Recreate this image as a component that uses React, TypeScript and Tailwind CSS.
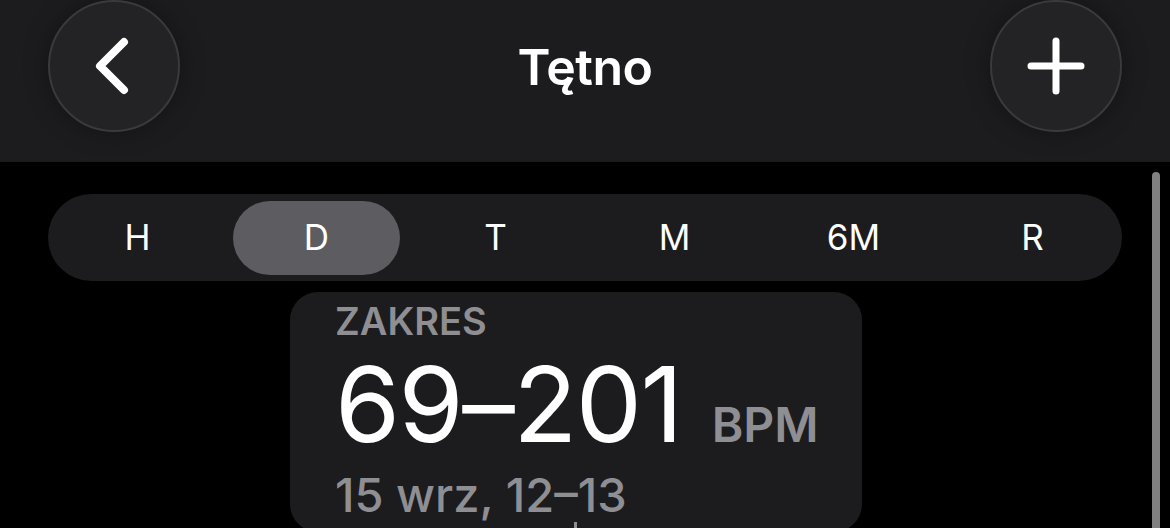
import React, { useState } from "react";

const segments = ["H", "D", "T", "M", "6M", "R"];

function RoundButton({ children }: { children: React.ReactNode }) {
  return (
    <button className="flex h-[132px] w-[132px] items-center justify-center rounded-full border-2 border-[#3a3a3d] bg-[#232326] shadow-[0_0_24px_rgba(0,0,0,0.35)]">
      {children}
    </button>
  );
}

export default function App() {
  const [active, setActive] = useState("D");

  return (
    <div
      className="relative h-[528px] w-[1170px] overflow-hidden bg-black text-white"
      style={{ fontFamily: "Inter, 'Noto Sans', sans-serif" }}
    >
      {/* nagłówek */}
      <header className="flex h-[162px] items-start justify-between bg-[#1c1c1e] px-[48px]">
        <RoundButton>
          <svg width="60" height="60" viewBox="0 0 60 60" fill="none">
            <path
              d="M40 6 L16 30 L40 54"
              stroke="white"
              strokeWidth="8"
              strokeLinecap="round"
              strokeLinejoin="round"
            />
          </svg>
        </RoundButton>
        <h1 className="mt-[37px] text-[50px] leading-[60px] font-semibold tracking-[-0.5px]">
          Tętno
        </h1>
        <RoundButton>
          <svg width="60" height="60" viewBox="0 0 60 60" fill="none">
            <path
              d="M30 5 V55 M5 30 H55"
              stroke="white"
              strokeWidth="7"
              strokeLinecap="round"
            />
          </svg>
        </RoundButton>
      </header>

      {/* zakres czasu */}
      <div className="mx-[48px] mt-[32px] grid h-[87px] grid-cols-6 items-center rounded-full bg-[#1c1c1e]">
        {segments.map((s) => (
          <button
            key={s}
            onClick={() => setActive(s)}
            className={`mx-[6px] flex h-[74px] items-center justify-center rounded-full text-[35px] font-normal ${
              active === s ? "bg-[#5c5c61]" : ""
            }`}
          >
            {s}
          </button>
        ))}
      </div>

      {/* karta z zakresem */}
      <div className="ml-[290px] mt-[11px] h-[240px] w-[572px] rounded-[28px] bg-[#1c1c1e] pl-[45px] pt-[6px]">
        <div className="text-[38px] leading-[46px] font-semibold text-[#8e8e93]">
          ZAKRES
        </div>
        <div className="mt-[18px] flex items-baseline leading-[84px]">
          <span className="text-[105px] font-normal tracking-[-1.5px]">
            69–201
          </span>
          <span className="ml-[30px] text-[48px] font-semibold text-[#8e8e93]">
            BPM
          </span>
        </div>
        <div className="mt-[4px] text-[47px] leading-[48px] font-medium text-[#8e8e93]">
          15 wrz, 12–13
        </div>
      </div>

      {/* wskaźnik przewijania */}
      <div className="absolute right-[10px] top-[172px] h-[400px] w-[8px] rounded-full bg-[#808080]" />
      <div className="absolute left-[574px] top-[522px] h-[8px] w-[3px] bg-[#8e8e93]" />
    </div>
  );
}
